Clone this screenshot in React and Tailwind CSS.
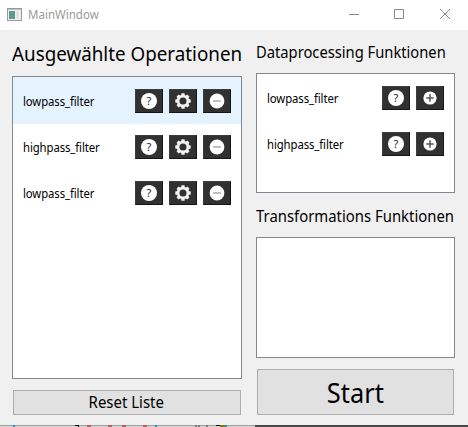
import React from "react";

function Glyph({ kind }) {
  if (kind === "gear") {
    return (
      <svg width="18" height="18" viewBox="0 0 18 18">
        <circle cx="9" cy="9" r="4.9" fill="none" stroke="#f2f2f2" strokeWidth="2.700" />
        {[0, 45, 90, 135, 180, 225, 270, 315].map((a) => (
          <rect key={a} x="7.3" y="1.3" width="3.4" height="2.8" rx=".5" fill="#f2f2f2" transform={`rotate(${a} 9 9)`} />
        ))}
      </svg>
    );
  }
  if (kind === "help") {
    return (
      <span className="flex size-4 items-center justify-center rounded-full bg-white pb-px font-['Noto_Sans',sans-serif] text-[11px] leading-none text-[#222]">
        ?
      </span>
    );
  }
  return (
    <svg width="16" height="16" viewBox="0 0 16 16">
      <circle cx="8" cy="8" r={kind === "plus" ? 6.6 : 7.4} fill="#fff" />
      {kind === "plus" ? (
        <path d="M4.300 8h7.400M8 4.300v7.400" stroke="#555" strokeWidth="1.5" />
      ) : (
        <path d="M4 8h8" stroke="#999" strokeWidth="1.2" />
      )}
    </svg>
  );
}

function IconButton({ kind }) {
  return (
    <button className="flex h-6 w-7 items-center justify-center border border-t-[#3c3c3c] border-r-[#151515] border-b-[#151515] border-l-[#3c3c3c] bg-[#313131]">
      <Glyph kind={kind} />
    </button>
  );
}

function Row({ name, kinds, selected }) {
  return (
    <div className={`flex items-center px-[10px] ${selected ? "h-[47px] bg-[#e5f3ff]" : "h-[46px]"}`}>
      <span className="flex-1 origin-left scale-x-[.945] pt-0.5 text-[12px] leading-4 tracking-[-0.1px]">{name}</span>
      <div className="flex gap-1.5">
        {kinds.map((k) => (
          <IconButton key={k} kind={k} />
        ))}
      </div>
    </div>
  );
}

const full = ["help", "gear", "minus"];
const add = ["help", "plus"];

export default function App() {
  return (
    <div className="flex h-[427px] w-[468px] flex-col overflow-hidden bg-[#f0f0f0] font-['Noto_Sans',sans-serif] text-black">
      <header className="flex h-[30px] shrink-0 items-center bg-white pl-[7px]">
        <svg className="-mt-[2px]" width="15" height="13" viewBox="0 0 15 13">
          <rect x=".5" y=".5" width="14" height="12" fill="#eee" stroke="#999" />
          <path d="M1 1.5h13" stroke="#b9c3cc" />
          <rect x="2" y="3" width="6" height="8" fill="#5c9a91" />
          <rect x="9" y="3" width="3" height="8" fill="#e3e3e3" />
        </svg>
        <span className="ml-[6px] flex-1 origin-left scale-x-[.96] text-[12px] leading-4 text-[#999]">MainWindow</span>
        <svg width="120" height="30" viewBox="0 0 120 30" fill="none" stroke="#888">
          <path d="M1 14.5h10M46.500 9.500h9v9h-9zM92 9l10 10M102 9l-10 10" />
        </svg>
      </header>
      <main className="flex h-[395px] shrink-0 gap-[14px] pt-[9px] pr-[13px] pb-[10px] pl-3">
        <section className="flex w-[230px] flex-col">
          <h1 className="h-[37px] origin-left scale-x-[.94] text-[20px] leading-[30px] whitespace-nowrap">Ausgewählte Operationen</h1>
          <div className="h-[303px] border border-[#828790] bg-white">
            <Row name="lowpass_filter" kinds={full} selected />
            <Row name="highpass_filter" kinds={full} />
            <Row name="lowpass_filter" kinds={full} />
          </div>
          <button className="mx-px mt-[11px] h-[25px] border border-[#adadad] bg-[#e1e1e1] pr-0.5 text-[16px] leading-[23px]">
            <span className="inline-block scale-x-[.935]">Reset Liste</span>
          </button>
        </section>
        <section className="flex w-[199px] flex-col">
          <h2 className="h-[34px] origin-left scale-x-[.92] text-[16px] leading-[26px] whitespace-nowrap">Dataprocessing Funktionen</h2>
          <div className="h-[120px] border border-[#828790] bg-white pt-px">
            <Row name="lowpass_filter" kinds={add} />
            <Row name="highpass_filter" kinds={add} />
          </div>
          <h2 className="h-[44px] origin-left scale-x-[.93] text-[16px] leading-[46px] whitespace-nowrap">Transformations Funktionen</h2>
          <div className="h-[121px] border border-[#828790] bg-white" />
          <button className="mx-px mt-[11px] h-[46px] border border-[#adadad] bg-[#e1e1e1] text-[27px] leading-[45px]">
            <span className="inline-block scale-x-[.94]">Start</span>
          </button>
        </section>
      </main>
      <footer className="flex h-0.5 shrink-0">
        <svg width="255" height="2" viewBox="0 0 255 2">
          <path d="M0 .5h255" stroke="#a0a0a0" />
          <path d="M0 1.500h255" stroke="#d4d4d4" />
          <path d="M13 1h2M155 1h2M225 1h2" stroke="#2a93b8" strokeWidth="2" />
          <path d="M87 1h4M108 1h4M122 1h4M143 1h4" stroke="#b06068" strokeWidth="2" />
          <path d="M75 .5h4M78 1.500h1M216 .5h4" stroke="#111" />
          <path d="M220 1h5" stroke="#7a7a10" strokeWidth="2" />
          <path d="M195 1h2M198 1h2M206 1h2" stroke="#777" strokeWidth="2" />
        </svg>
        <div className="flex-1 bg-[#484848]" />
      </footer>
    </div>
  );
}
